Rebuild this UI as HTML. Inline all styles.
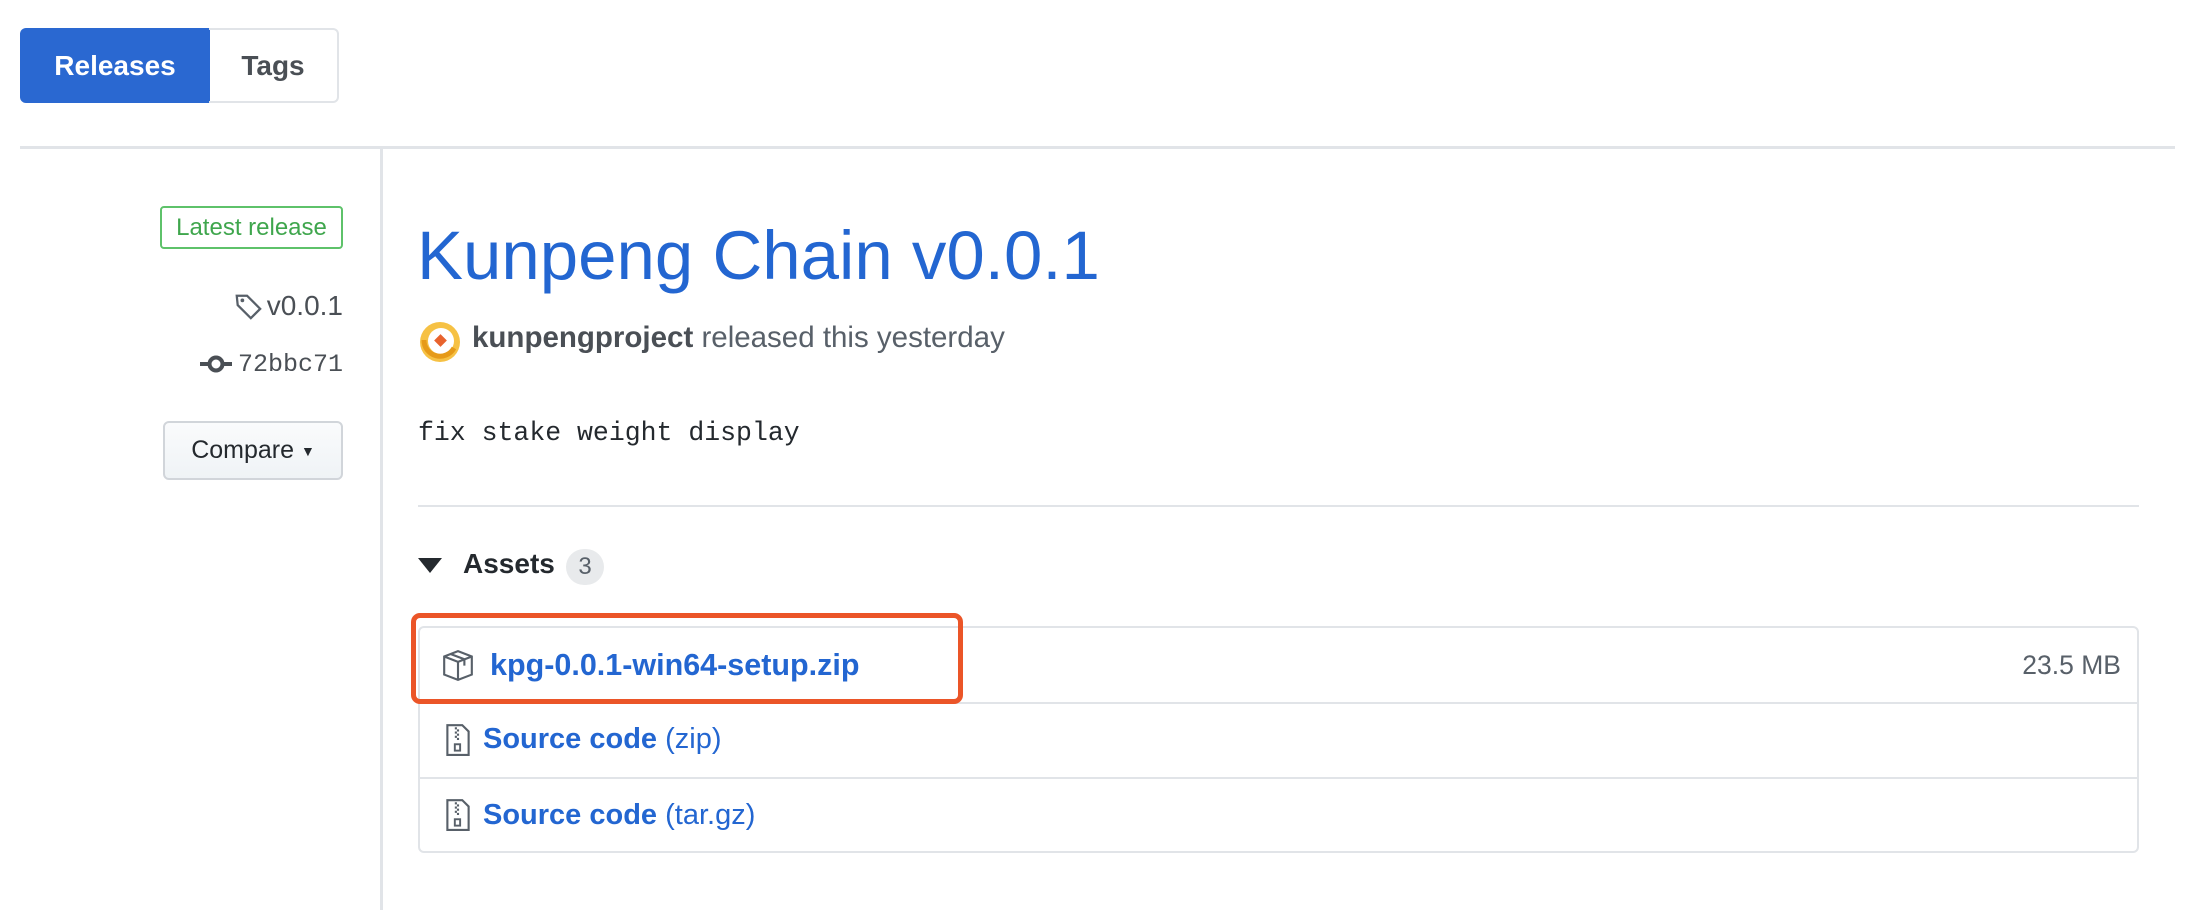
<!DOCTYPE html>
<html><head><meta charset="utf-8"><style>
*{box-sizing:border-box;margin:0;padding:0}
body{width:2202px;height:910px;background:#fff;font-family:"Liberation Sans",Arial,sans-serif;position:relative;overflow:hidden;color:#24292e}
.abs{position:absolute}
.tab{position:absolute;top:28px;height:75px;display:flex;align-items:center;justify-content:center;font-size:28px;font-weight:bold}
.mono{font-family:"Liberation Mono",monospace}
.blue{color:#2366d1}
.row{position:absolute;left:418px;width:1721px;border:2px solid #e1e4e8;display:flex;align-items:center;font-size:29px;font-weight:bold}
</style></head><body>
<div class="tab" style="left:20px;width:190px;background:#2a68d1;color:#fff;border-radius:6px 0 0 6px">Releases</div>
<div class="tab" style="left:209px;width:130px;border:2px solid #e1e4e8;border-left:none;border-radius:0 6px 6px 0;color:#4a4f55">Tags</div>
<div class="abs" style="left:20px;top:146px;width:2155px;height:3px;background:#e1e4e8"></div>
<div class="abs" style="left:380px;top:148px;width:3px;height:762px;background:#e1e4e8"></div>

<div class="abs" style="left:160px;top:206px;width:183px;height:43px;border:2px solid #5ec26a;border-radius:4px;color:#3fa64d;font-size:24px;display:flex;align-items:center;justify-content:center">Latest release</div>
<div class="abs" style="left:230px;top:288px;width:113px;height:36px;font-size:28px;color:#4a4f55;display:flex;align-items:center;justify-content:flex-end;gap:4px">
<svg width="30" height="30" viewBox="0 0 16 16"><path d="M2 2.5h5.5l7 7-5 5-7-7z" fill="none" stroke="#586069" stroke-width="1.2"/><circle cx="5" cy="5" r="1" fill="#586069"/></svg>v0.0.1</div>
<div class="abs" style="left:190px;top:346px;width:153px;height:36px;font-size:25px;color:#4a4f55;display:flex;align-items:center;justify-content:flex-end;gap:6px">
<svg width="32" height="20" viewBox="0 0 32 20"><line x1="0" y1="10" x2="32" y2="10" stroke="#4a4f55" stroke-width="4"/><circle cx="16" cy="10" r="6.5" fill="#fff" stroke="#4a4f55" stroke-width="4"/></svg><span class="mono">72bbc71</span></div>
<div class="abs" style="left:163px;top:421px;width:180px;height:59px;border:2px solid #d1d5da;border-radius:6px;background:linear-gradient(#fafbfc,#eff3f6);font-size:25px;color:#24292e;display:flex;align-items:center;justify-content:center">Compare&nbsp;<span style="font-size:14px">▼</span></div>

<div class="abs blue" style="left:417px;top:214px;font-size:69px;line-height:84px">Kunpeng Chain v0.0.1</div>
<svg class="abs" style="left:418px;top:320px" width="44" height="44" viewBox="0 0 44 44"><circle cx="22" cy="22" r="20" fill="#f6c144"/><circle cx="23" cy="21" r="13" fill="#fff"/><path d="M6 20a16 16 0 0 0 30 8" stroke="#e69a18" stroke-width="5" fill="none"/><rect x="18" y="16" width="9" height="9" fill="#e8632d" transform="rotate(45 22.5 20.5)"/></svg>
<div class="abs" style="left:472px;top:321px;font-size:29.5px;color:#586069;white-space:nowrap"><b style="color:#4a4f55">kunpengproject</b> released this yesterday</div>
<div class="abs mono" style="left:418px;top:418px;font-size:26.5px;color:#24292e">fix stake weight display</div>
<div class="abs" style="left:418px;top:505px;width:1721px;height:2px;background:#e1e4e8"></div>

<div class="abs" style="left:418px;top:558px;width:0;height:0;border-left:12px solid transparent;border-right:12px solid transparent;border-top:15px solid #24292e"></div>
<div class="abs" style="left:463px;top:548px;font-size:28px;font-weight:bold">Assets</div>
<div class="abs" style="left:566px;top:549px;width:38px;height:36px;border-radius:18px;background:#e8eaec;color:#586069;font-size:24px;display:flex;align-items:center;justify-content:center">3</div>

<div class="row" style="top:626px;height:78px;border-radius:6px 6px 0 0">
<svg style="margin-left:20px" width="36" height="34" viewBox="0 0 16 16"><path d="M1.5 4l6.5-2.5 6.5 2.5v8.5l-6.5 2.5-6.5-2.5z M1.5 4l6.5 2.5 6.5-2.5 M8 6.5v8.5 M4.5 2.8l6.5 2.5v3" fill="none" stroke="#586069" stroke-width="1"/></svg>
<span class="blue" style="margin-left:14px;font-size:30.5px">kpg-0.0.1-win64-setup.zip</span>
<span style="margin-left:auto;margin-right:16px;font-weight:normal;font-size:26.5px;color:#586069">23.5 MB</span></div>
<div class="row" style="top:702px;height:77px;border-top:none">
<svg style="margin-left:24px" width="28" height="34" viewBox="0 0 12 16"><path d="M1 1h7l3 3v11H1z" fill="none" stroke="#586069" stroke-width="1"/><path d="M5 2v1M6 3v1M5 4v1M6 5v1M5 6v1M6 7v1" stroke="#586069"/><rect x="4.5" y="10" width="2.5" height="3" fill="none" stroke="#586069" stroke-width=".9"/></svg>
<span class="blue" style="margin-left:11px">Source code <span style="font-weight:normal">(zip)</span></span></div>
<div class="row" style="top:777px;height:76px;border-top:2px solid #e1e4e8;border-radius:0 0 6px 6px">
<svg style="margin-left:24px" width="28" height="34" viewBox="0 0 12 16"><path d="M1 1h7l3 3v11H1z" fill="none" stroke="#586069" stroke-width="1"/><path d="M5 2v1M6 3v1M5 4v1M6 5v1M5 6v1M6 7v1" stroke="#586069"/><rect x="4.5" y="10" width="2.5" height="3" fill="none" stroke="#586069" stroke-width=".9"/></svg>
<span class="blue" style="margin-left:11px">Source code <span style="font-weight:normal">(tar.gz)</span></span></div>

<div class="abs" style="left:411px;top:613px;width:552px;height:91px;border:5px solid #eb5528;border-radius:9px"></div>
</body></html>
